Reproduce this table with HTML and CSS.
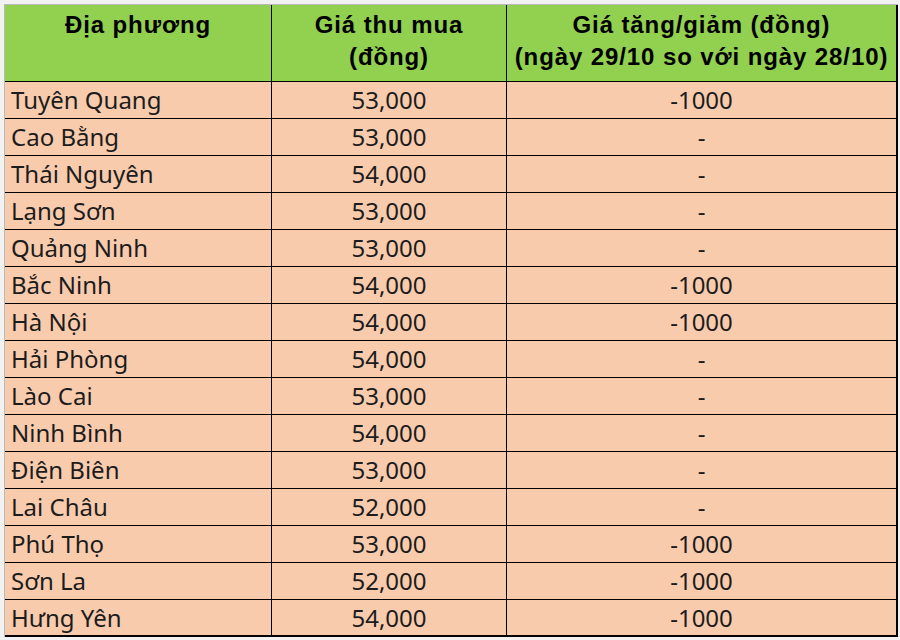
FILE: index.html
```html
<!DOCTYPE html>
<html lang="vi">
<head>
<meta charset="utf-8">
<title>Giá thu mua</title>
<link rel="stylesheet" href="styles.css">
</head>
<body>
<div class="sheet">
  <div class="grid">
    <div class="hd">Địa phương</div>
    <div class="hd">Giá thu mua<br>(đồng)</div>
    <div class="hd last">Giá tăng/giảm (đồng)<br>(ngày 29/10 so với ngày 28/10)</div>

    <div class="c name">Tuyên Quang</div><div class="c num">53,000</div><div class="c num last">-1000</div>
    <div class="c name">Cao Bằng</div><div class="c num">53,000</div><div class="c num last">-</div>
    <div class="c name">Thái Nguyên</div><div class="c num">54,000</div><div class="c num last">-</div>
    <div class="c name">Lạng Sơn</div><div class="c num">53,000</div><div class="c num last">-</div>
    <div class="c name">Quảng Ninh</div><div class="c num">53,000</div><div class="c num last">-</div>
    <div class="c name">Bắc Ninh</div><div class="c num">54,000</div><div class="c num last">-1000</div>
    <div class="c name">Hà Nội</div><div class="c num">54,000</div><div class="c num last">-1000</div>
    <div class="c name">Hải Phòng</div><div class="c num">54,000</div><div class="c num last">-</div>
    <div class="c name">Lào Cai</div><div class="c num">53,000</div><div class="c num last">-</div>
    <div class="c name">Ninh Bình</div><div class="c num">54,000</div><div class="c num last">-</div>
    <div class="c name">Điện Biên</div><div class="c num">53,000</div><div class="c num last">-</div>
    <div class="c name">Lai Châu</div><div class="c num">52,000</div><div class="c num last">-</div>
    <div class="c name">Phú Thọ</div><div class="c num">53,000</div><div class="c num last">-1000</div>
    <div class="c name">Sơn La</div><div class="c num">52,000</div><div class="c num last">-1000</div>
    <div class="c name bottom">Hưng Yên</div><div class="c num bottom">54,000</div><div class="c num last bottom">-1000</div>
  </div>
</div>
</body>
</html>
```

FILE: styles.css
```css
html, body {
  margin: 0;
  padding: 0;
  background: #f2f2f2;
}

.sheet {
  padding: 4px 0 0 4px;
}

.grid {
  display: grid;
  grid-template-columns: 267px 235px 391px;
  grid-auto-rows: 37px;
  grid-template-rows: 77px;
  width: max-content;
  border-top: 1px solid #b9b9b9;
  border-left: 1px solid #b9b9b9;
}

.hd,
.c {
  box-sizing: border-box;
  border-right: 1px solid #000;
  border-bottom: 1px solid #000;
}

.hd {
  background: #92d050;
  color: #000;
  font-family: "Liberation Sans", Arial, sans-serif;
  font-weight: bold;
  font-size: 24px;
  letter-spacing: 0.9px;
  line-height: 32px;
  text-align: center;
  padding-top: 4px;
}

.c {
  background: #f8cbad;
  color: #1c1c1c;
  font-family: "Noto Sans", "Open Sans", sans-serif;
  font-size: 24px;
  line-height: 36px;
  white-space: nowrap;
}

.name {
  padding-left: 6px;
}

.num {
  text-align: center;
}

.last {
  border-right-width: 2px;
}

.bottom {
  border-bottom-width: 2px;
}
```
